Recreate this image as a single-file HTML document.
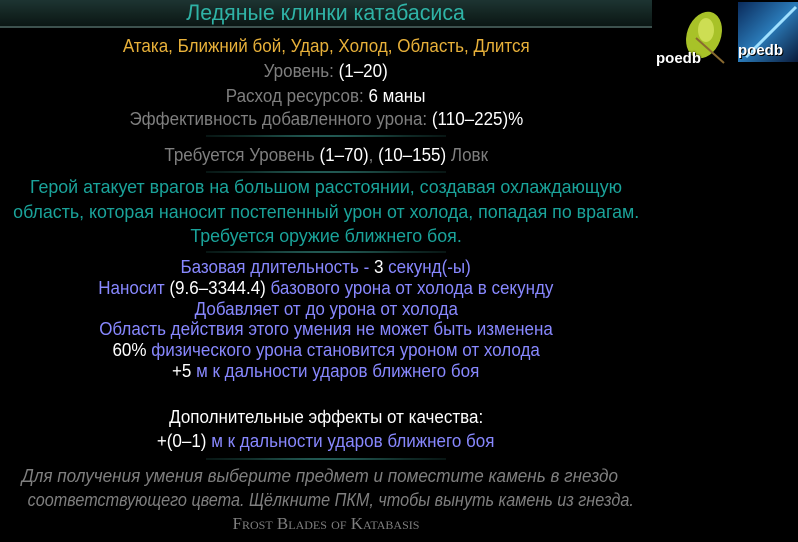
<!DOCTYPE html>
<html><head><meta charset="utf-8"><style>
body{margin:0;width:798px;height:542px;background:#000;overflow:hidden;position:relative;font-family:"Liberation Sans","Noto Sans CJK SC",sans-serif}
.l{position:absolute;left:0;width:652px;text-align:center;font-size:18px;line-height:20px;white-space:nowrap}
.l span.s{display:inline-block;transform:scaleX(.945);transform-origin:center}
.l.t span.s{transform:scaleX(.99)}
.l.i span.s{transform:scaleX(.9)}
.g{color:#7f7f7f}.w{color:#fff}.y{color:#e8b13a}.t{color:#1aa39a}.b{color:#8888ff}
.sep{position:absolute;left:206px;width:240px;height:2px;background:radial-gradient(ellipse at center,#3fa39a 0%,rgba(40,110,100,.5) 50%,rgba(0,0,0,0) 100%)}
.hdr{position:absolute;left:0;top:0;width:652px;height:28px;background:linear-gradient(#1d3432,#12221f 60%,#0b1614);border-bottom:2px solid #3d514e;box-sizing:border-box}
</style></head><body>
<div class="hdr"></div>
<div class="l" style="top:1px;font-size:22px;line-height:24px;color:#2fb3a6"><span class="s" style="transform:scaleX(.97)">Ледяные клинки катабасиса</span></div>
<div style="position:absolute;left:666px;top:8px;width:66px;height:62px">
<svg width="66" height="62"><ellipse cx="38" cy="27" rx="17" ry="24" fill="#a8c228" transform="rotate(20 38 27)"/><ellipse cx="40" cy="22" rx="8" ry="12" fill="#e6f070" opacity=".6"/><line x1="30" y1="30" x2="58" y2="55" stroke="#8a6a30" stroke-width="2"/></svg>
<div style="position:absolute;left:-10px;top:42px;color:#fff;font-weight:bold;font-size:15px;text-shadow:0 0 2px #000,1px 1px 0 #000">poedb</div></div>
<div style="position:absolute;left:738px;top:2px;width:60px;height:60px;background:linear-gradient(135deg,#0a2a5a,#2a7ab8 50%,#0a1a3a)">
<svg width="60" height="60" style="position:absolute;left:0;top:0"><line x1="8" y1="55" x2="58" y2="5" stroke="#9fe0ff" stroke-width="3"/></svg>
<div style="position:absolute;left:0;top:40px;color:#fff;font-weight:bold;font-size:15px;text-shadow:1px 1px 0 #000">poedb</div></div>

<div class="l y" style="top:36px"><span class="s">Атака, Ближний бой, Удар, Холод, Область, Длится</span></div>
<div class="l g" style="top:61px"><span class="s">Уровень: <span class="w">(1–20)</span></span></div>
<div class="l g" style="top:86px"><span class="s">Расход ресурсов: <span class="w">6 маны</span></span></div>
<div class="l g" style="top:109px"><span class="s">Эффективность добавленного урона: <span class="w">(110–225)%</span></span></div>
<div class="sep" style="top:135px"></div>
<div class="l g" style="top:145px"><span class="s">Требуется Уровень <span class="w">(1–70)</span>, <span class="w">(10–155)</span> Ловк</span></div>
<div class="sep" style="top:171px"></div>
<div class="l t" style="top:177px"><span class="s">Герой атакует врагов на большом расстоянии, создавая охлаждающую</span></div>
<div class="l t" style="top:202px"><span class="s">область, которая наносит постепенный урон от холода, попадая по врагам.</span></div>
<div class="l t" style="top:226px"><span class="s">Требуется оружие ближнего боя.</span></div>
<div class="sep" style="top:251px"></div>
<div class="l b" style="top:257px"><span class="s">Базовая длительность - <span class="w">3</span> секунд(-ы)</span></div>
<div class="l b" style="top:278px"><span class="s">Наносит <span class="w">(9.6–3344.4)</span> базового урона от холода в секунду</span></div>
<div class="l b" style="top:299px"><span class="s">Добавляет от до урона от холода</span></div>
<div class="l b" style="top:319px"><span class="s">Область действия этого умения не может быть изменена</span></div>
<div class="l b" style="top:340px"><span class="s"><span class="w">60%</span> физического урона становится уроном от холода</span></div>
<div class="l b" style="top:361px"><span class="s"><span class="w">+5</span> м к дальности ударов ближнего боя</span></div>
<div class="l w" style="top:407px"><span class="s">Дополнительные эффекты от качества:</span></div>
<div class="l b" style="top:431px"><span class="s"><span class="w">+(0–1)</span> м к дальности ударов ближнего боя</span></div>
<div class="sep" style="top:458px"></div>
<div class="l g i" style="top:466px;left:-6px;font-style:italic"><span class="s" style="transform:scaleX(.95)">Для получения умения выберите предмет и поместите камень в гнездо</span></div>
<div class="l g i" style="top:490px;left:-6px;font-style:italic"><span class="s">соответствующего цвета. Щёлкните ПКМ, чтобы вынуть камень из гнезда.</span></div>
<div class="l g" style="top:514px;font-size:17px;font-variant:small-caps;font-family:'Liberation Serif',serif"><span class="s" style="transform:none">Frost Blades of Katabasis</span></div>
</body></html>
